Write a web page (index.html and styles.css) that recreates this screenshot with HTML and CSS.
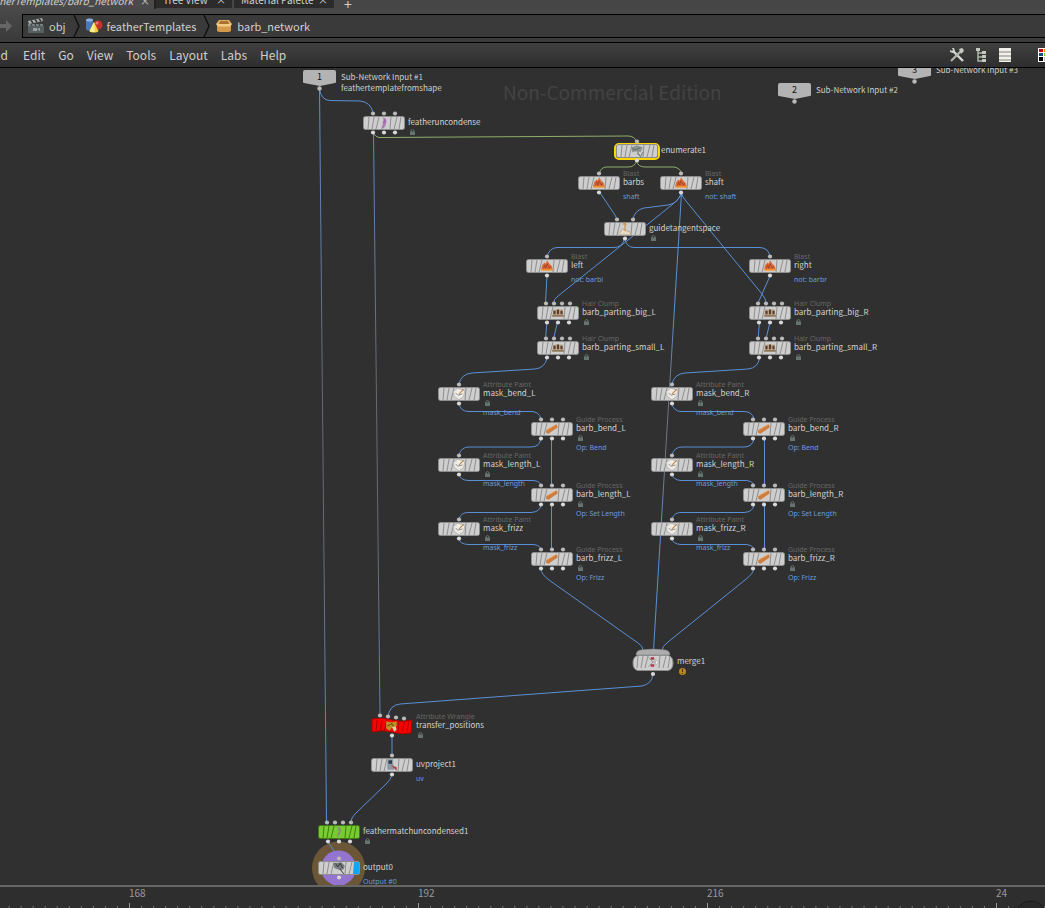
FILE: index.html
```
<!DOCTYPE html>
<html lang="en">
<head>
  <meta charset="UTF-8" />
  <meta name="viewport" content="width=device-width, initial-scale=1.0"/>
  <title>barb_network</title>
  <link rel="stylesheet" href="styles.css">
</head>
<body>

  <!-- Pane tabs -->
  <div class="tabs">
    <button class="tab tab-active"><span>featherTemplates/barb_network</span><span class="tab-close">×</span></button>
    <button class="tab tab-tree"><span>Tree View</span><span class="tab-close">×</span></button>
    <button class="tab tab-material"><span>Material Palette</span><span class="tab-close">×</span></button>
    <button class="tab-add">+</button>
  </div>

  <!-- Path bar -->
  <nav class="pathbar">
    <button class="forward" aria-label="Forward">
      <svg width="13" height="14" viewBox="0 0 13 14"><path d="M0 5h6V1l6 6-6 6V9H0z" fill="#666"/></svg>
    </button>
    <div class="path">
      <a href="#" class="crumb">
        <svg width="18" height="18" viewBox="0 0 18 18">
          <path d="M1 4 15 1l1 3L2 7z" fill="#a9afaf"/>
          <path d="m4 3.500 2 2.500M8 2.500l2 2.500M12 1.800l2 2.500" stroke="#333" stroke-width="1.500"/>
          <path d="M1 7h15v2H1z" fill="#7b8484"/>
          <path d="M4 7l1 2M8 7l1 2M12 7l1 2" stroke="#333"/>
          <path d="M1 9h16v7H1z" fill="#566060"/>
          <path d="M6 11h4v3H6zM10 12l3-1v3z" fill="#9aa3a3"/>
        </svg>
        <span>obj</span>
      </a>
      <svg width="8" height="22" viewBox="0 0 8 22"><path d="m1 0 5 11-5 11" fill="none" stroke="#111" stroke-width="1.500"/></svg>
      <a href="#" class="crumb">
        <svg width="18" height="18" viewBox="0 0 18 18">
          <path d="M1 3c0-2 7-2 7 0v9c0 2-7 2-7 0z" fill="#4a78b8"/>
          <ellipse cx="4.500" cy="3" rx="3.500" ry="1.500" fill="#8fb3de"/>
          <circle cx="13" cy="8" r="4.500" fill="#c8322a"/>
          <circle cx="12" cy="6" r="1.500" fill="#e88078"/>
          <path d="m9 5 4.500 9c-1 2-8 2-9 0z" fill="#f0d23c"/>
          <path d="m9 5 1 10c-3 0-5 0-5.500-1z" fill="#fdf08c"/>
        </svg>
        <span>featherTemplates</span>
      </a>
      <svg width="8" height="22" viewBox="0 0 8 22"><path d="m1 0 5 11-5 11" fill="none" stroke="#111" stroke-width="1.500"/></svg>
      <a href="#" class="crumb">
        <svg width="18" height="18" viewBox="0 0 18 18">
          <path d="M4 3h10l3 4-3 2H4L1 7z" fill="#e6b469"/>
          <path d="M5 4h8l1 3H4z" fill="#a8702c"/>
          <path d="M2 8h14v6l-2 1H4l-2-1z" fill="#d39a4a"/>
          <path d="M1 7h16l-2 2.500H3z" fill="#f3ca86"/>
        </svg>
        <span>barb_network</span>
      </a>
    </div>
  </nav>

  <!-- Menu bar -->
  <div class="menubar">
    <button class="menu menu-cut">Add</button>
    <button class="menu">Edit</button>
    <button class="menu">Go</button>
    <button class="menu">View</button>
    <button class="menu">Tools</button>
    <button class="menu">Layout</button>
    <button class="menu">Labs</button>
    <button class="menu">Help</button>
    <div class="tools">
      <button class="tool" aria-label="Tools">
        <svg width="16" height="16" viewBox="0 0 16 16">
          <path d="m4 4 10 10" stroke="#d5d8d2" stroke-width="2.400"/>
          <path d="M1 3v2l3 1 2-2-1-3H3l1 2-1 1z" fill="#d5d8d2"/>
          <path d="M14 2 2 14" stroke="#b4b8b0" stroke-width="2.200"/>
          <path d="m10 2 3-1 2 3-3 3z" fill="#c6cac2"/>
        </svg>
      </button>
      <button class="tool" aria-label="Tree">
        <svg width="16" height="16" viewBox="0 0 16 16">
          <path d="M5 4v10h4M5 6h4M5 10h4" fill="none" stroke="#a9b5a5" stroke-width="1.500"/>
          <path d="M3 1h4v3H3zM9 4h4v3H9zM9 8h4v3H9zM9 12h4v3H9z" fill="#c3cbbf"/>
        </svg>
      </button>
      <button class="tool" aria-label="List">
        <svg width="16" height="16" viewBox="0 0 16 16">
          <path d="M2 1h12v14H2z" fill="#f1f1ea"/>
          <path d="M2 4h12v2H2zM2 8h12v2H2zM2 12h12v2H2z" fill="#b9bab3"/>
        </svg>
      </button>
      <button class="tool tool-palette" aria-label="Palette">
        <svg width="16" height="16" viewBox="0 0 16 16">
          <path d="M1 1h15v14H1z" fill="#fff"/>
          <path d="M2 2h4v3H2z" fill="#c00"/><path d="M7 2h4v3H7z" fill="#f57900"/>
          <path d="M2 6h4v3H2z" fill="#204a87"/><path d="M7 6h4v3H7z" fill="#73d216"/>
          <path d="M2 10h4v4H2z" fill="#000"/><path d="M7 10h4v4H7z" fill="#bbb"/>
        </svg>
      </button>
    </div>
  </div>

  <!-- Network view -->
  <main class="view">
    <div class="watermark">Non-Commercial Edition</div>
    <div class="graph" id="graph">
      <svg class="wires">
        <defs>
          <linearGradient id="fadeLong" gradientUnits="userSpaceOnUse" x1="0" y1="90" x2="0" y2="822">
            <stop offset="0" stop-color="#5b8fd6"/><stop offset=".4" stop-color="#666a70"/>
            <stop offset=".6" stop-color="#666a70"/><stop offset="1" stop-color="#5b8fd6"/>
          </linearGradient>
          <linearGradient id="fadeShaft" gradientUnits="userSpaceOnUse" x1="0" y1="193" x2="0" y2="650">
            <stop offset="0" stop-color="#5b8fd6"/><stop offset=".25" stop-color="#5b8fd6"/><stop offset=".45" stop-color="#70757c"/>
            <stop offset=".58" stop-color="#70757c"/><stop offset=".75" stop-color="#5b8fd6"/><stop offset="1" stop-color="#5b8fd6"/>
          </linearGradient>
        </defs>
        <circle cx="338.500" cy="868" r="26.500" fill="#6b5637"/>
        <circle cx="338.500" cy="868" r="17.500" fill="#9474cf"/>
        <g class="wire">
          <path stroke="url(#fadeLong)" d="M319.500 89 326.500 822"/>
          <path stroke="url(#fadeLong)" d="M373.500 132 380 715"/>
          <path stroke="url(#fadeShaft)" d="M681.500 193 653.500 650"/>
          <path d="M319.500 89Q321 100 330 100.500L360 101Q371 102 373 113"/>
          <path d="M599.500 192 615 215Q616.500 217 616.500 220"/>
          <path d="M681.500 192Q679 203 668 205L644 208Q635 210 633 219"/>
          <path d="M681.500 192Q681 197 673 204L558 296Q554 299 553.500 303"/>
          <path d="M681.500 192Q682 197 686 201L762 294Q766 299 766 303"/>
          <path d="M624.500 239Q622 247.500 614 247.500H557Q549 248 547 257"/>
          <path d="M624.500 239Q627 247.500 634 247.500H760Q769 248 770 257"/>
          <path d="M547 276 545.500 303M770 276 758 303"/>
          <path d="M547 322 545.500 339M557.500 322 553.500 339M759.500 322 758 339M770 322 766 339"/>
          <path d="M547 358Q545 368 535 369L472 373Q461 374 459 384"/>
          <path d="M759.500 358Q758 368 748 369L685 373Q674 374 672 384"/>
          <path d="M459 403Q460 411 468 411.500H530Q539 411 541 419M541 438Q540 447 531 447H469Q461 447 459 455"/>
          <path d="M459 474Q460 480 468 480.500H530Q539 480 541 485M541 505Q540 512 531 512.500H469Q461 512 459 519"/>
          <path d="M459 539Q460 544 468 544.500H530Q539 544 541 549M551.500 438V485M551.500 505V549"/>
          <path d="M672 403Q673 411 681 411.500H743Q752 411 754 419M754 438Q753 447 744 447H682Q674 447 672 455"/>
          <path d="M672 474Q673 480 681 480.500H743Q752 480 754 485M754 505Q753 512 744 512.500H682Q674 512 672 519"/>
          <path d="M672 539Q673 544 681 544.500H743Q752 544 754 549M764.500 438V485M764.500 505V549"/>
          <path d="M541 569Q541 574 549 580L638 643Q643 646 643 650"/>
          <path d="M753.500 569Q754 573 745 580L668 642Q662 646 662 651"/>
          <path d="M653 674Q652 684 642 686L400 704Q390 705 388 716"/>
          <path d="M392 736V755M392 774Q391 780 386 784L355 814Q351 818 351 822M328 842Q329 844 337 855"/>
        </g>
        <g class="wire wire-mask">
          <path d="M373.500 132Q375 137.500 380 137.500L628 136Q635 136 636.500 142"/>
          <path d="M636.500 161Q635 167 628 167H607Q601 167 599.500 173M636.500 161Q638 167 645 167H674Q680 168 681.500 173"/>
        </g>
      </svg>
    </div>
  </main>

  <!-- Playbar ruler -->
  <footer class="timeline">
    <svg class="ruler" id="ruler"></svg>
  </footer>

  <!-- Node icons -->
  <svg class="symbols">
    <symbol id="icon-feather" viewBox="0 0 12 12"><path d="M5 1q4 1 3 5-1 4-3 5-1-2 1-4-2-1-1-2 1-2 0-4z" fill="#b07ab8"/><path d="M4 11 7 3" stroke="#8b5a96" stroke-width=".600"/></symbol>
    <symbol id="icon-enumerate" viewBox="0 0 12 12"><path d="m1 3 5-2 5 2-2 4-3-1-4 1z" fill="#8a9490"/><path d="m2 4 3 1 4-2M6 6l3 5 2-4M6 8l2 2" stroke="#566" stroke-width=".700" fill="none"/></symbol>
    <symbol id="icon-blast" viewBox="0 0 12 12"><path d="m1 9 1-4 2-2 1 1 1-3 2 3 2 2 1 3z" fill="#dc6a34"/><path d="m3 8 1-3 1 3 1-4 2 4 1-2" stroke="#a8452c" stroke-width=".800" fill="none"/><path d="M1 8.500h10V10H1z" fill="#f0902c"/></symbol>
    <symbol id="icon-tangent" viewBox="0 0 12 12"><path d="m1 10 3-4 7 3v2H2z" fill="#e5dcc8" stroke="#b5a88c" stroke-width=".700"/><path d="M6 8V1M4 2l2-1 1 2" stroke="#c79350" fill="none"/></symbol>
    <symbol id="icon-clump" viewBox="0 0 12 12"><path d="M2 3h8l1 6H1z" fill="#b9a988"/><path d="M3 7V4m3 3V3m3 4V4" stroke="#5c3a2e" stroke-width="1.800"/><path d="M1 8h10v1H1z" fill="#7a5f45"/></symbol>
    <symbol id="icon-paint" viewBox="0 0 12 12"><path d="m1 4 4-3 6 2-1 5-4 3-4-3z" fill="#efece6" stroke="#aaa" stroke-width=".600"/><path d="m3 5 2 2 4-1" stroke="#888" stroke-width=".800" fill="none"/><path d="m6 6 4-4" stroke="#c07a3c" stroke-width=".900"/></symbol>
    <symbol id="icon-guide" viewBox="0 0 12 12"><path d="m1 7 9-5 1 2.500L3 10 1 9.500z" fill="#cf7d3c"/><path d="m1 7 9-5" stroke="#e8a468" stroke-width=".800"/></symbol>
    <symbol id="icon-merge" viewBox="0 0 12 12"><path d="m2 2 4 4-4 4M6 6h4" stroke="#999" stroke-width=".800" fill="none"/><path d="M4 2h3v2H4zM4 8h3v2H4z" fill="#a83a44"/><path d="m8 4 3 2-3 3z" fill="#eee" stroke="#999" stroke-width=".500"/></symbol>
    <symbol id="icon-wrangle" viewBox="0 0 12 12"><path d="m1 2 5 1 4-1v4l-4 1-2 3-3-2z" fill="#b89222"/><path d="m2 6 4-2 2 3" stroke="#5a4210" stroke-width=".800" fill="none"/><path d="m6 7 3-1 1 3-2 2z" fill="#d9d2a8"/></symbol>
    <symbol id="icon-uv" viewBox="0 0 12 12"><path d="M2 1h5v4l1 5H2z" fill="#8a98a8"/><path d="M3 2h3v3H3z" fill="#333d4a"/><path d="m5 6 5 2v3z" fill="#b04038"/></symbol>
    <symbol id="icon-match" viewBox="0 0 12 12"><path d="M5 1q4 2 2 6l-2 4q-1-4 1-5-1-2-1-5z" fill="#8a8a80"/></symbol>
    <symbol id="icon-output" viewBox="0 0 12 12"><path d="m1 2 7-1 3 3-1 3-3 1-5-2z" fill="#777c80"/><path d="m3 2 2 3 2-3 2 4M7 7l3 4" stroke="#333" stroke-width=".800" fill="none"/></symbol>
  </svg>

  <script src="network.js"></script>
</body>
</html>
```
FILE: styles.css
```
* {
  box-sizing: border-box;
}

body, html {
  margin: 0;
  padding: 0;
}

body {
  height: 100vh;
  display: flex;
  flex-direction: column;
  overflow: hidden;
  background: #303030;
  font-family: "Noto Sans CJK SC", "Noto Sans", sans-serif;
  color: #cfcfcf;
}

button {
  margin: 0;
  padding: 0;
  border: none;
  background: none;
  color: inherit;
  font-family: inherit;
}

a {
  color: inherit;
  text-decoration: none;
}

svg {
  display: block;
  flex-shrink: 0;
}

/* pane tabs, scrolled half out of the window */
.tabs {
  display: flex;
  flex-shrink: 0;
  height: 9px;
  overflow: hidden;
  background: #464646;
}

.tab {
  display: flex;
  justify-content: space-between;
  align-items: flex-end;
  height: 8px;
  padding: 0 6px 0 7px;
  background: #2b2b2b;
  border-right: 2px solid #464646;
  font-size: 10px;
  line-height: 16px;
  white-space: nowrap;
  overflow: hidden;
}

.tab-active {
  width: 156px;
  justify-content: flex-end;
  gap: 7px;
  padding-right: 4px;
  height: 9px;
  background: #4a4a4a;
  border-right-color: #222;
  font-style: italic;
}

.tab-tree {
  width: 78px;
}

.tab-material {
  width: 102px;
}

.tab-close {
  font-style: normal;
}

.tab-add {
  padding-left: 8px;
  font-size: 14px;
  line-height: 1px;
}

/* path bar */
.pathbar {
  display: flex;
  align-items: center;
  flex-shrink: 0;
  gap: 9px;
  height: 33px;
  background: linear-gradient(#494949, #3a3a3a);
}

.path {
  display: flex;
  align-items: center;
  flex: 1;
  gap: 4px;
  height: 24px;
  padding-left: 4px;
  border: 1px solid #000;
  border-right: none;
  background: #3a3a3a;
}

.crumb {
  display: flex;
  align-items: center;
  gap: 4px;
  padding-right: 3px;
  font-size: 11px;
  line-height: 20px;
}

/* menu bar */
.menubar {
  display: flex;
  align-items: center;
  flex-shrink: 0;
  gap: 13px;
  height: 26px;
  border-top: 1px solid #000;
  border-bottom: 1px solid #000;
  background: linear-gradient(#404040, #2e2e2e);
  overflow: hidden;
}

.menu {
  font-size: 12px;
  line-height: 20px;
}

.menu-cut {
  display: flex;
  justify-content: flex-end;
  width: 8px;
  margin-right: 2px;
  overflow: hidden;
}

.tools {
  display: flex;
  gap: 8px;
  margin-left: auto;
}

.tool-palette {
  width: 8px;
  margin-left: 16px;
  overflow: hidden;
}

/* network view */
.view {
  position: relative;
  flex: 1;
  overflow: hidden;
}

.watermark {
  position: absolute;
  top: 9px;
  left: 503px;
  font-size: 19px;
  line-height: 30px;
  color: #434343;
  white-space: nowrap;
}

.graph {
  position: absolute;
  top: -68px;
  left: 0;
  width: 100%;
}

.wires {
  position: absolute;
  top: 0;
  left: 0;
  width: 100%;
  height: 1000px;
  overflow: visible;
}

.wire {
  fill: none;
  stroke: #5b8fd6;
  stroke-width: 1;
}

.wire-mask {
  stroke: #8fae6a;
}

.node {
  position: absolute;
  display: flex;
  align-items: flex-start;
  gap: 3px;
  height: 24px;
}

.dot {
  fill: #b9b9b9;
}

.dot-out {
  fill: #d8d8d8;
}

.label {
  display: flex;
  flex-direction: column;
  margin-top: -2px;
  white-space: nowrap;
}

.type {
  height: 7px;
  font-family: "Noto Sans", sans-serif;
  font-size: 7px;
  line-height: 10px;
  color: #666;
}

.name {
  font-size: 8px;
  line-height: 12px;
  color: #d2d2d2;
}

.meta {
  height: 3px;
}

.meta-lock {
  height: 8px;
  padding: 1px 0 0 2px;
}

.comment {
  font-family: "Noto Sans", sans-serif;
  font-size: 7px;
  line-height: 12px;
  color: #6b9bdc;
}

.input {
  position: absolute;
  display: flex;
  align-items: flex-start;
  gap: 5px;
}

.input-text {
  margin-top: 1px;
  font-size: 8px;
  line-height: 11px;
  white-space: nowrap;
}

.input-number {
  font-size: 9px;
  text-anchor: middle;
  fill: #111;
}

/* ruler */
.timeline {
  flex-shrink: 0;
  height: 23px;
  border-top: 2px solid #666;
  background: #2e2e2e;
  overflow: hidden;
}

.ruler {
  width: 100%;
  height: 21px;
}

.ruler text {
  font-size: 10px;
  fill: #999;
}

.symbols {
  position: absolute;
  width: 0;
  height: 0;
}
```
FILE: network.js
```
// [x, y] is the centre of the node body
const nodes = [
  { x: 384, y: 123, name: "featheruncondense", icon: "feather", ins: 3, outs: 3, lock: true },
  { x: 637, y: 151, name: "enumerate1", icon: "enumerate", ins: 1, outs: 1, selected: true },
  { x: 599, y: 183, type: "Blast", name: "barbs", icon: "blast", ins: 1, outs: 1, comment: "shaft" },
  { x: 681, y: 183, type: "Blast", name: "shaft", icon: "blast", ins: 1, outs: 1, comment: "not: shaft" },
  { x: 625, y: 229, name: "guidetangentspace", icon: "tangent", ins: 2, outs: 1, lock: true },
  { x: 547, y: 266, type: "Blast", name: "left", icon: "blast", ins: 1, outs: 1, comment: "not: barbl" },
  { x: 770, y: 266, type: "Blast", name: "right", icon: "blast", ins: 1, outs: 1, comment: "not: barbr" },
  { x: 653, y: 662, name: "merge1", icon: "merge", ins: 0, outs: 1, shape: "merge", warning: true },
  { x: 392, y: 726, type: "Attribute Wrangle", name: "transfer_positions", icon: "wrangle", ins: 4, outs: 1, lock: true, shape: "wave", fill: "#fb0000", edge: "#b00000" },
  { x: 392, y: 765, name: "uvproject1", icon: "uv", ins: 1, outs: 1, comment: "uv" },
  { x: 339, y: 832, name: "feathermatchuncondensed1", icon: "match", ins: 4, outs: 3, lock: true, fill: "#78cc30", edge: "#3f7d12" },
  { x: 339, y: 868, name: "output0", icon: "output", ins: 1, outs: 1, comment: "Output #0", display: true }
];

// left and right halves of the groom
[["L", 459, 552, 558], ["R", 672, 764, 770]].forEach(([side, mask, barb, clump]) => {
  [["big", 313], ["small", 348]].forEach(([size, y]) => {
    nodes.push({ x: clump, y, type: "Hair Clump", name: `barb_parting_${size}_${side}`, icon: "clump", ins: 4, outs: 3, lock: true });
  });

  [["bend", 394, 429, "Bend"], ["length", 465, 495, "Set Length"], ["frizz", 529, 559, "Frizz"]].forEach(([op, maskY, barbY, title]) => {
    const maskName = op === "frizz" && side === "L" ? "mask_frizz" : `mask_${op}_${side}`;
    nodes.push({ x: mask, y: maskY, type: "Attribute Paint", name: maskName, icon: "paint", ins: 1, outs: 1, lock: true, comment: `mask_${op}` });
    nodes.push({ x: barb, y: barbY, type: "Guide Process", name: `barb_${op}_${side}`, icon: "guide", ins: 3, outs: 3, lock: true, comment: `Op: ${title}` });
  });
});

const inputs = [
  { x: 303, y: 70, number: 1, lines: ["Sub-Network Input #1", "feathertemplatefromshape"] },
  { x: 778, y: 83, number: 2, lines: ["Sub-Network Input #2"] },
  { x: 898, y: 63, number: 3, lines: ["Sub-Network Input #3"] }
];

const spread = { 0: [], 1: [21], 2: [13, 29], 3: [10, 21, 32], 4: [9, 17, 25, 33] };

const bodies = {
  box: "M2.500 5.500h37q2 0 2 2v9q0 2-2 2h-37q-2 0-2-2v-9q0-2 2-2z",
  wave: "M1 5q10-2 20 1t20 0l-1 13q-9 2-19-1t-20 0z",
  merge: "M6 5.500h30q5 1 5 7.500t-5 7.500H6q-5-1-5-7.500t5-7.500z"
};

function drawBody(node) {
  const fill = node.fill || "#cecece";
  const edge = node.edge || "#8e8e8e";
  let svg = `<svg width="42" height="24" overflow="visible">`;

  if (node.shape === "merge") {
    svg += `<path d="M4 5q0-4 4-5 13-2 26 0 4 1 4 5z" fill="#adadad" stroke="#777" stroke-width=".5"/>`;
  }
  if (node.selected) {
    svg += `<rect x="-1" y="5" width="44" height="15" rx="4" fill="#111" stroke="#ffd500" stroke-width="2"/>`;
  }
  svg += `<path d="${bodies[node.shape || "box"]}" fill="${fill}" stroke="${edge}"/>`;
  svg += `<path d="M6 6 5 18M11 6 9 18M16 6l-3 12M28 6l-1 12M34 6l-3 12M38 6l-2 12" stroke="${edge}" stroke-width="1"/>`;
  if (node.display) {
    svg += `<path d="M36 6h4q1 0 1 1v10q0 1-1 1h-5z" fill="#13a5f0"/>`;
  }
  svg += `<use href="#icon-${node.icon}" x="14" y="5" width="14" height="14"/>`;

  spread[node.ins].forEach((x, i) => {
    const slope = node.shape === "wave" ? i - 1 : 0;
    svg += `<circle class="dot" cx="${x}" cy="${2.5 + slope}" r="2.1"/>`;
  });
  spread[node.outs].forEach(x => {
    svg += `<circle class="dot dot-out" cx="${x}" cy="${node.shape === "merge" ? 24 : 21.5}" r="2.1"/>`;
  });
  return svg + `</svg>`;
}

function drawNode(node) {
  let meta = `<div class="meta"></div>`;
  if (node.lock) {
    meta = `<div class="meta meta-lock"><svg width="5" height="6"><path d="M0 2.500h5V6H0z" fill="#667470"/><path d="M1 3V1.500q1.500-2 3 0V3" fill="none" stroke="#667470"/></svg></div>`;
  }
  if (node.warning) {
    meta = `<div class="meta meta-lock"><svg width="7" height="7"><circle cx="3.500" cy="3.500" r="3.500" fill="#b48a10"/><path d="M3.500 1v3M3.500 5v1" stroke="#443300"/></svg></div>`;
  }
  return `<div class="node" style="left:${node.x - 21}px;top:${node.y - 12}px">
    ${drawBody(node)}
    <div class="label">
      <div class="type">${node.type || ""}</div>
      <div class="name">${node.name}</div>
      ${meta}
      <div class="comment">${node.comment || ""}</div>
    </div>
  </div>`;
}

function drawInput(input) {
  return `<div class="input" style="left:${input.x}px;top:${input.y}px">
    <svg width="33" height="22">
      <path d="M2 0h29q2 0 2 2v10q0 1-1 1l-15 3-16-3q-1 0-1-1V2q0-2 2-2z" fill="#b3b3b3"/>
      <circle class="dot" cx="16.500" cy="18.500" r="2.200"/>
      <text class="input-number" x="16.500" y="10">${input.number}</text>
    </svg>
    <div class="input-text">${input.lines.join("<br>")}</div>
  </div>`;
}

document.getElementById("graph").insertAdjacentHTML("beforeend", inputs.map(drawInput).join("") + nodes.map(drawNode).join(""));

// one tick per frame, a number on every 24th
const frame = 289 / 24;
let ruler = "";
for (let i = -10; i < 120; i++) {
  const x = 129.5 + i * frame;
  const major = i % 24 === 0;
  ruler += `<path d="M${x} 21v${major ? -5 : -2}" stroke="${major ? "#999" : "#777"}"/>`;
}
["168", "192", "216", "24"].forEach((text, i) => {
  ruler += `<text x="${129 + i * 289}" y="10">${text}</text>`;
});
ruler += `<circle cx="1031" cy="30" r="16" fill="#292929" stroke="#1c1c1c"/>`;
document.getElementById("ruler").innerHTML = ruler;
```
